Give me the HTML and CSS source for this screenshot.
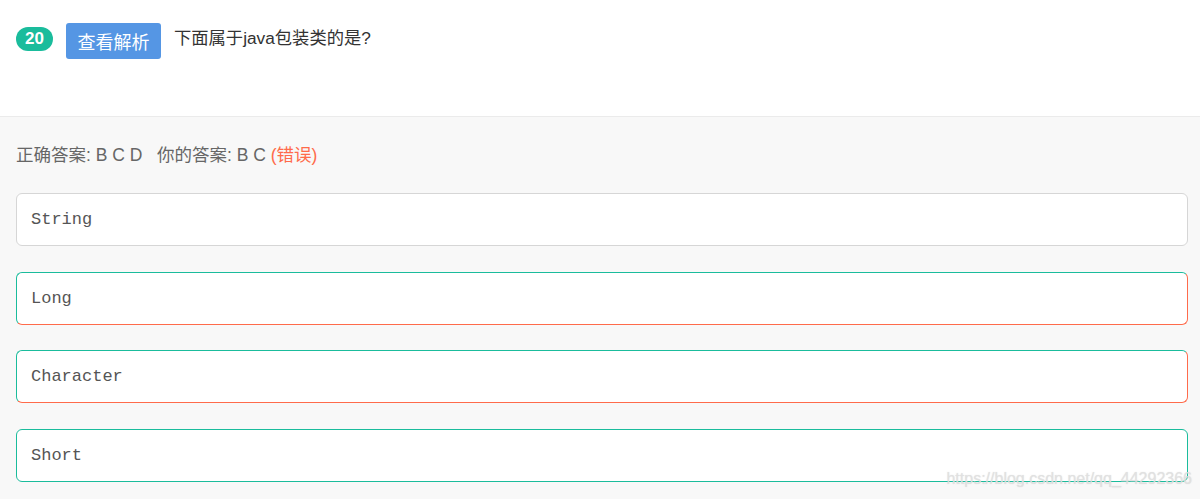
FILE: index.html
```html
<!DOCTYPE html>
<html lang="zh">
<head>
<meta charset="utf-8">
<title>题目 20</title>
<link rel="stylesheet" href="styles.css">
</head>
<body>
<div class="page">
  <header class="question">
    <span class="num">20</span>
    <button class="analysis">查看解析</button>
    <span class="title">下面属于java包装类的是?</span>
  </header>
  <section class="answers">
    <p class="result">正确答案: B C D&nbsp;&nbsp;&nbsp;你的答案: B C <span class="wrong">(错误)</span></p>
    <div class="option">String</div>
    <div class="option mixed">Long</div>
    <div class="option mixed">Character</div>
    <div class="option right">Short</div>
  </section>
  <div class="watermark">https://blog.csdn.net/qq_44292366</div>
</div>
</body>
</html>
```
FILE: styles.css
```css
html, body {
  margin: 0;
  padding: 0;
  background: #f8f8f8;
}
body {
  font-family: "Liberation Sans", "Noto Sans CJK SC", sans-serif;
  color: #333;
}
.page {
  position: relative;
  height: 499px;
  overflow: hidden;
}
.question {
  display: flex;
  align-items: flex-start;
  background: #fff;
  height: 117px;
  box-sizing: border-box;
  padding: 23px 16px 0 16px;
  border-bottom: 1px solid #ebebeb;
}
.num {
  display: inline-flex;
  align-items: center;
  justify-content: center;
  width: 37px;
  height: 24px;
  margin-top: 4px;
  border-radius: 12px;
  background: #1abc9c;
  color: #fff;
  font-size: 17px;
  font-weight: bold;
  line-height: 24px;
}
.analysis {
  margin-left: 13px;
  width: 95px;
  height: 36px;
  border: none;
  border-radius: 3px;
  background: #5596e4;
  color: #fff;
  font-family: "Liberation Sans", "Noto Sans CJK SC", sans-serif;
  font-size: 18px;
  padding: 0;
}
.title {
  margin-left: 13px;
  margin-top: 5px;
  font-size: 17.3px;
  line-height: 20px;
  color: #333;
}
.answers {
  padding: 0 12px 0 16px;
  display: flex;
  flex-direction: column;
  gap: 25.5px;
}
.result {
  margin: 27px 0 0.5px 0;
  height: 23px;
  line-height: 23px;
  font-size: 17.5px;
  color: #666;
}
.wrong {
  color: #ff6b4b;
}
.option {
  height: 53px;
  box-sizing: border-box;
  display: flex;
  align-items: center;
  padding: 0 14px;
  background: #fff;
  border: 1px solid #d6d6d6;
  border-radius: 6px;
  font-family: "Liberation Mono", monospace;
  font-size: 17px;
  color: #555;
}
.option.mixed {
  border-color: #1abc9c #ff6b4b #ff6b4b #1abc9c;
}
.option.right {
  border-color: #1abc9c;
}
.watermark {
  position: absolute;
  right: 8px;
  top: 470px;
  font-family: "Liberation Sans", sans-serif;
  font-size: 16px;
  color: rgba(225, 225, 225, 0.85);
  text-shadow: 0 0 1px rgba(190, 190, 190, 0.5);
}
```
